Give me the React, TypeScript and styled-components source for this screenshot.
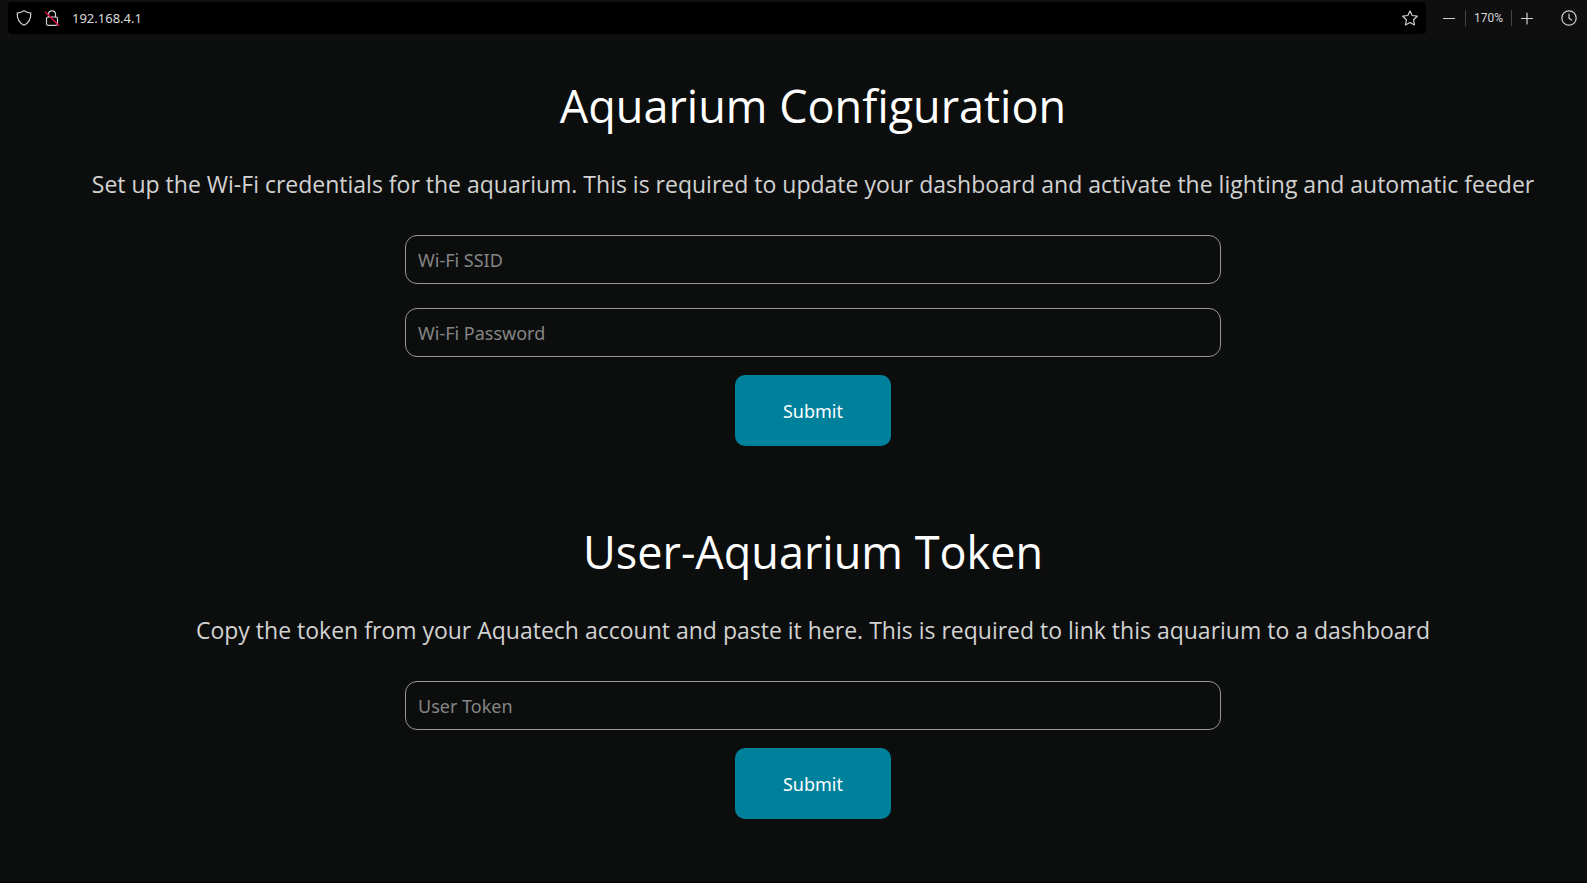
import React, { useState } from "react";
import styled, { createGlobalStyle } from "styled-components";

const GlobalStyle = createGlobalStyle`
  *, *::before, *::after { box-sizing: border-box; }
  body {
    margin: 0;
    background: #0c0e0d;
    color: #ffffff;
    font-family: "Open Sans", "Noto Sans", sans-serif;
  }
`;

const Screen = styled.div`
  display: flex;
  flex-direction: column;
  min-height: 100vh;
  border-bottom: 2px solid #0b0306;
`;

const Toolbar = styled.header`
  display: flex;
  align-items: center;
  height: 40px;
  padding: 2px 10px 6px 8px;
  background: #0f0f0f;
  color: #d6d6d6;
`;

const AddressBar = styled.div`
  display: flex;
  flex: 1;
  align-items: center;
  gap: 12px;
  height: 32px;
  padding: 0 8px;
  border-radius: 4px;
  background: #000000;
`;

const AddressInput = styled.input`
  flex: 1;
  min-width: 0;
  padding: 0;
  border: 0;
  outline: 0;
  background: transparent;
  color: #dadada;
  font: 13px/20px "Noto Sans", sans-serif;
`;

const IconButton = styled.button`
  display: grid;
  place-items: center;
  width: 16px;
  height: 16px;
  padding: 0;
  border: 0;
  background: transparent;
  color: #d0d0d0;
`;

const ZoomGroup = styled.div`
  display: flex;
  align-items: center;
  gap: 8px;
  margin: 0 25px 0 15px;
`;

const ZoomLevel = styled.span`
  width: 47px;
  border: solid #454545;
  border-width: 0 1px;
  font: 12px/16px Roboto, sans-serif;
  text-align: center;
`;

const Page = styled.main`
  display: flex;
  flex-direction: column;
  gap: 68px;
  padding: 28px 0 60px 39px;
`;

const Section = styled.section`
  display: flex;
  flex-direction: column;
  align-items: center;
`;

const Title = styled.h1`
  margin: 0;
  font-size: 45px;
  font-weight: 400;
  line-height: 76px;
  text-align: center;
`;

const Description = styled.p`
  margin: 20px 0 30px;
  color: #d2d2d2;
  font-size: 23px;
  line-height: 41px;
  text-align: center;
`;

const Form = styled.form`
  display: flex;
  flex-direction: column;
  align-items: center;
  gap: 24px;
  width: 816px;
  max-width: 100%;
`;

const Field = styled.input`
  width: 100%;
  height: 49px;
  padding: 0 12px;
  border: 1px solid #969696;
  border-radius: 12px;
  background: transparent;
  color: #ffffff;
  font: 18px/24px "Noto Sans", sans-serif;

  &::placeholder { color: #858585; opacity: 1; }
`;

const SubmitButton = styled.button`
  margin-top: -6px;
  padding: 24px 48px 23px;
  border: 0;
  border-radius: 10px;
  background: #00819b;
  color: #ffffff;
  font: 18px/24px "Noto Sans", sans-serif;
`;

const iconProps = {
  width: 16,
  height: 16,
  viewBox: "0 0 16 16",
  fill: "none",
  stroke: "currentColor",
  strokeWidth: 1.2,
  strokeLinecap: "round" as const,
  strokeLinejoin: "round" as const,
  "aria-hidden": true,
};

const ShieldIcon = () => (
  <svg {...iconProps}>
    <path d="M8 .8C6.200 2 3.700 2.800 1.200 3.100C1 8.200 3 12.900 8 15.300C13 12.900 15 8.200 14.800 3.100C12.300 2.800 9.800 2 8 .8Z" />
  </svg>
);

const LockIcon = () => (
  <svg {...iconProps}>
    <path d="M4.500 7V4.300a3.500 3.500 0 0 1 7 0V7" />
    <rect x="2.500" y="7" width="11" height="8.300" rx="1.500" />
    <path d="M1.500 2.300L14.500 15.300" stroke="#e2123f" strokeWidth="1.500" />
  </svg>
);

const StarIcon = () => (
  <svg {...iconProps}>
    <path d="M8 .9L10.200 5.500L15.300 6.200L11.600 9.800L12.500 15L8 12.500L3.500 15L4.400 9.800L.7 6.200L5.800 5.500Z" />
  </svg>
);

const MinusIcon = () => (
  <svg {...iconProps}><path d="M2.500 8.500H13.500" /></svg>
);

const PlusIcon = () => (
  <svg {...iconProps}><path d="M1.500 8.500H12.500M7 3V14" /></svg>
);

const ClockIcon = () => (
  <svg {...iconProps}>
    <circle cx="8" cy="8" r="7.200" />
    <path d="M8 4V8.300L10.600 10" />
  </svg>
);

type SetupSectionProps = {
  title: string;
  description: string;
  fields: { label: string; type: string }[];
};

function SetupSection({ title, description, fields }: SetupSectionProps) {
  return (
    <Section>
      <Title>{title}</Title>
      <Description>{description}</Description>
      <Form onSubmit={(event) => event.preventDefault()}>
        {fields.map((field) => (
          <Field key={field.label} type={field.type} placeholder={field.label} aria-label={field.label} />
        ))}
        <SubmitButton type="submit">Submit</SubmitButton>
      </Form>
    </Section>
  );
}

export default function App() {
  const [address, setAddress] = useState("192.168.4.1");
  const [zoom, setZoom] = useState(170);

  return (
    <Screen>
      <GlobalStyle />
      <Toolbar>
        <AddressBar>
          <IconButton aria-label="Tracking protection"><ShieldIcon /></IconButton>
          <IconButton aria-label="Connection not secure"><LockIcon /></IconButton>
          <AddressInput aria-label="Address" value={address} onChange={(event) => setAddress(event.target.value)} />
          <IconButton aria-label="Bookmark this page"><StarIcon /></IconButton>
        </AddressBar>
        <ZoomGroup>
          <IconButton aria-label="Zoom out" onClick={() => setZoom(zoom - 10)}><MinusIcon /></IconButton>
          <ZoomLevel>{zoom}%</ZoomLevel>
          <IconButton aria-label="Zoom in" onClick={() => setZoom(zoom + 10)}><PlusIcon /></IconButton>
        </ZoomGroup>
        <IconButton aria-label="History"><ClockIcon /></IconButton>
      </Toolbar>
      <Page>
        <SetupSection
          title="Aquarium Configuration"
          description="Set up the Wi-Fi credentials for the aquarium. This is required to update your dashboard and activate the lighting and automatic feeder"
          fields={[
            { label: "Wi-Fi SSID", type: "text" },
            { label: "Wi-Fi Password", type: "password" },
          ]}
        />
        <SetupSection
          title="User-Aquarium Token"
          description="Copy the token from your Aquatech account and paste it here. This is required to link this aquarium to a dashboard"
          fields={[{ label: "User Token", type: "text" }]}
        />
      </Page>
    </Screen>
  );
}
